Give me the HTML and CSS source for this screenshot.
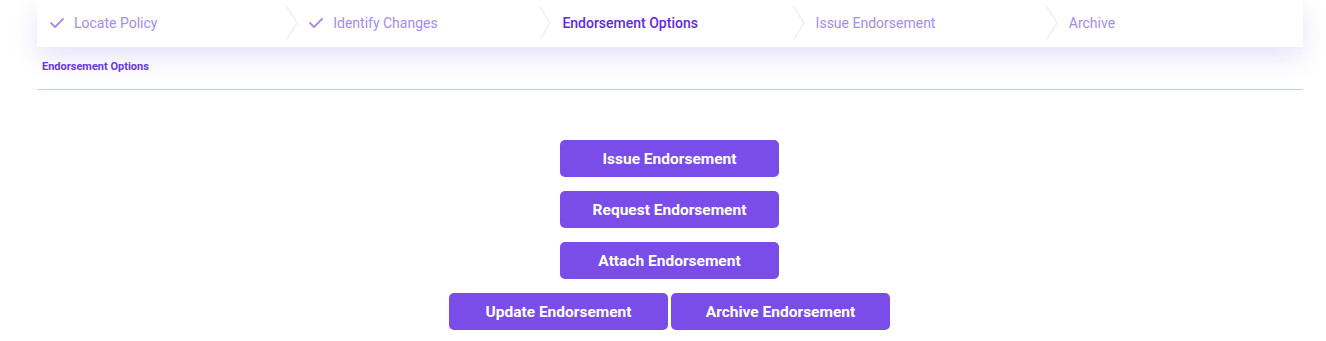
FILE: index.html
```html
<!DOCTYPE html>
<html lang="en">

<head>
    <meta charset="UTF-8">
    <meta name="viewport" content="width=device-width, initial-scale=1.0">
    <title>Endorsement Options</title>
    <link rel="stylesheet" href="styles.css">
</head>

<body>

    <div class="page">

        <!-- Stepper -->
        <div class="stepper">
            <div class="step done first">
                <svg class="check" viewBox="0 0 14 10" width="14" height="10"><path d="M1 5 L5 9 L13 1" /></svg>
                <span>Locate Policy</span>
            </div>
            <div class="step done">
                <svg class="chevron" viewBox="0 0 12 34" width="12" height="34"><path d="M1 1 L11 17 L1 33" /></svg>
                <svg class="check" viewBox="0 0 14 10" width="14" height="10"><path d="M1 5 L5 9 L13 1" /></svg>
                <span>Identify Changes</span>
            </div>
            <div class="step active">
                <svg class="chevron" viewBox="0 0 12 34" width="12" height="34"><path d="M1 1 L11 17 L1 33" /></svg>
                <span>Endorsement Options</span>
            </div>
            <div class="step">
                <svg class="chevron" viewBox="0 0 12 34" width="12" height="34"><path d="M1 1 L11 17 L1 33" /></svg>
                <span>Issue Endorsement</span>
            </div>
            <div class="step">
                <svg class="chevron" viewBox="0 0 12 34" width="12" height="34"><path d="M1 1 L11 17 L1 33" /></svg>
                <span>Archive</span>
            </div>
        </div>

        <div class="section-title">Endorsement Options</div>

        <!-- Options -->
        <div class="options">
            <button class="option-btn">Issue Endorsement</button>
            <button class="option-btn">Request Endorsement</button>
            <button class="option-btn">Attach Endorsement</button>
            <div class="option-row">
                <button class="option-btn">Update Endorsement</button>
                <button class="option-btn">Archive Endorsement</button>
            </div>
        </div>

    </div>

</body>

</html>
```

FILE: styles.css
```css
/* General Styling */
body {
    font-family: Roboto, 'Liberation Sans', Arial, sans-serif;
    margin: 0;
    padding: 0;
    background: #fff;
}

.page {
    padding: 0 23px 0 37px;
}

/* Stepper */
.stepper {
    display: grid;
    grid-template-columns: repeat(5, 1fr);
    height: 47px;
    background: #fff;
    box-shadow: 0 10px 24px rgba(98, 90, 225, 0.17);
    position: relative;
    z-index: 1;
}

.step {
    display: flex;
    align-items: center;
    font-size: 14px;
    color: #a48cf2;
    padding-bottom: 2px;
    min-width: 0;
}

.step.first {
    padding-left: 13px;
}

.step.active {
    color: #6327e4;
    font-weight: 500;
}

.step .chevron {
    margin-left: -4px;
    margin-right: 11px;
}

.step .chevron path {
    fill: none;
    stroke: #f0f0f6;
    stroke-width: 1.5;
}

.step .check {
    margin-right: 10px;
}

.step .check path {
    fill: none;
    stroke: #a48cf2;
    stroke-width: 1.8;
    stroke-linecap: round;
    stroke-linejoin: round;
}

/* Section title */
.section-title {
    font-size: 11px;
    font-weight: 700;
    color: #6a35e6;
    padding: 13px 5px 16px;
    border-bottom: 1px solid #bcd5f5;
    line-height: 13px;
}

/* Option buttons */
.options {
    display: flex;
    flex-direction: column;
    align-items: center;
    gap: 14px;
    margin-top: 50px;
    padding-right: 1px;
}

.option-row {
    display: flex;
    gap: 3px;
}

.option-btn {
    width: 219px;
    height: 37px;
    background-color: #7a4de9;
    color: white;
    border: none;
    border-radius: 5px;
    font-family: Roboto, 'Liberation Sans', Arial, sans-serif;
    font-size: 15.5px;
    font-weight: 700;
    cursor: pointer;
    padding: 0;
}

.option-btn:hover {
    background-color: #6a3ddc;
}
```
